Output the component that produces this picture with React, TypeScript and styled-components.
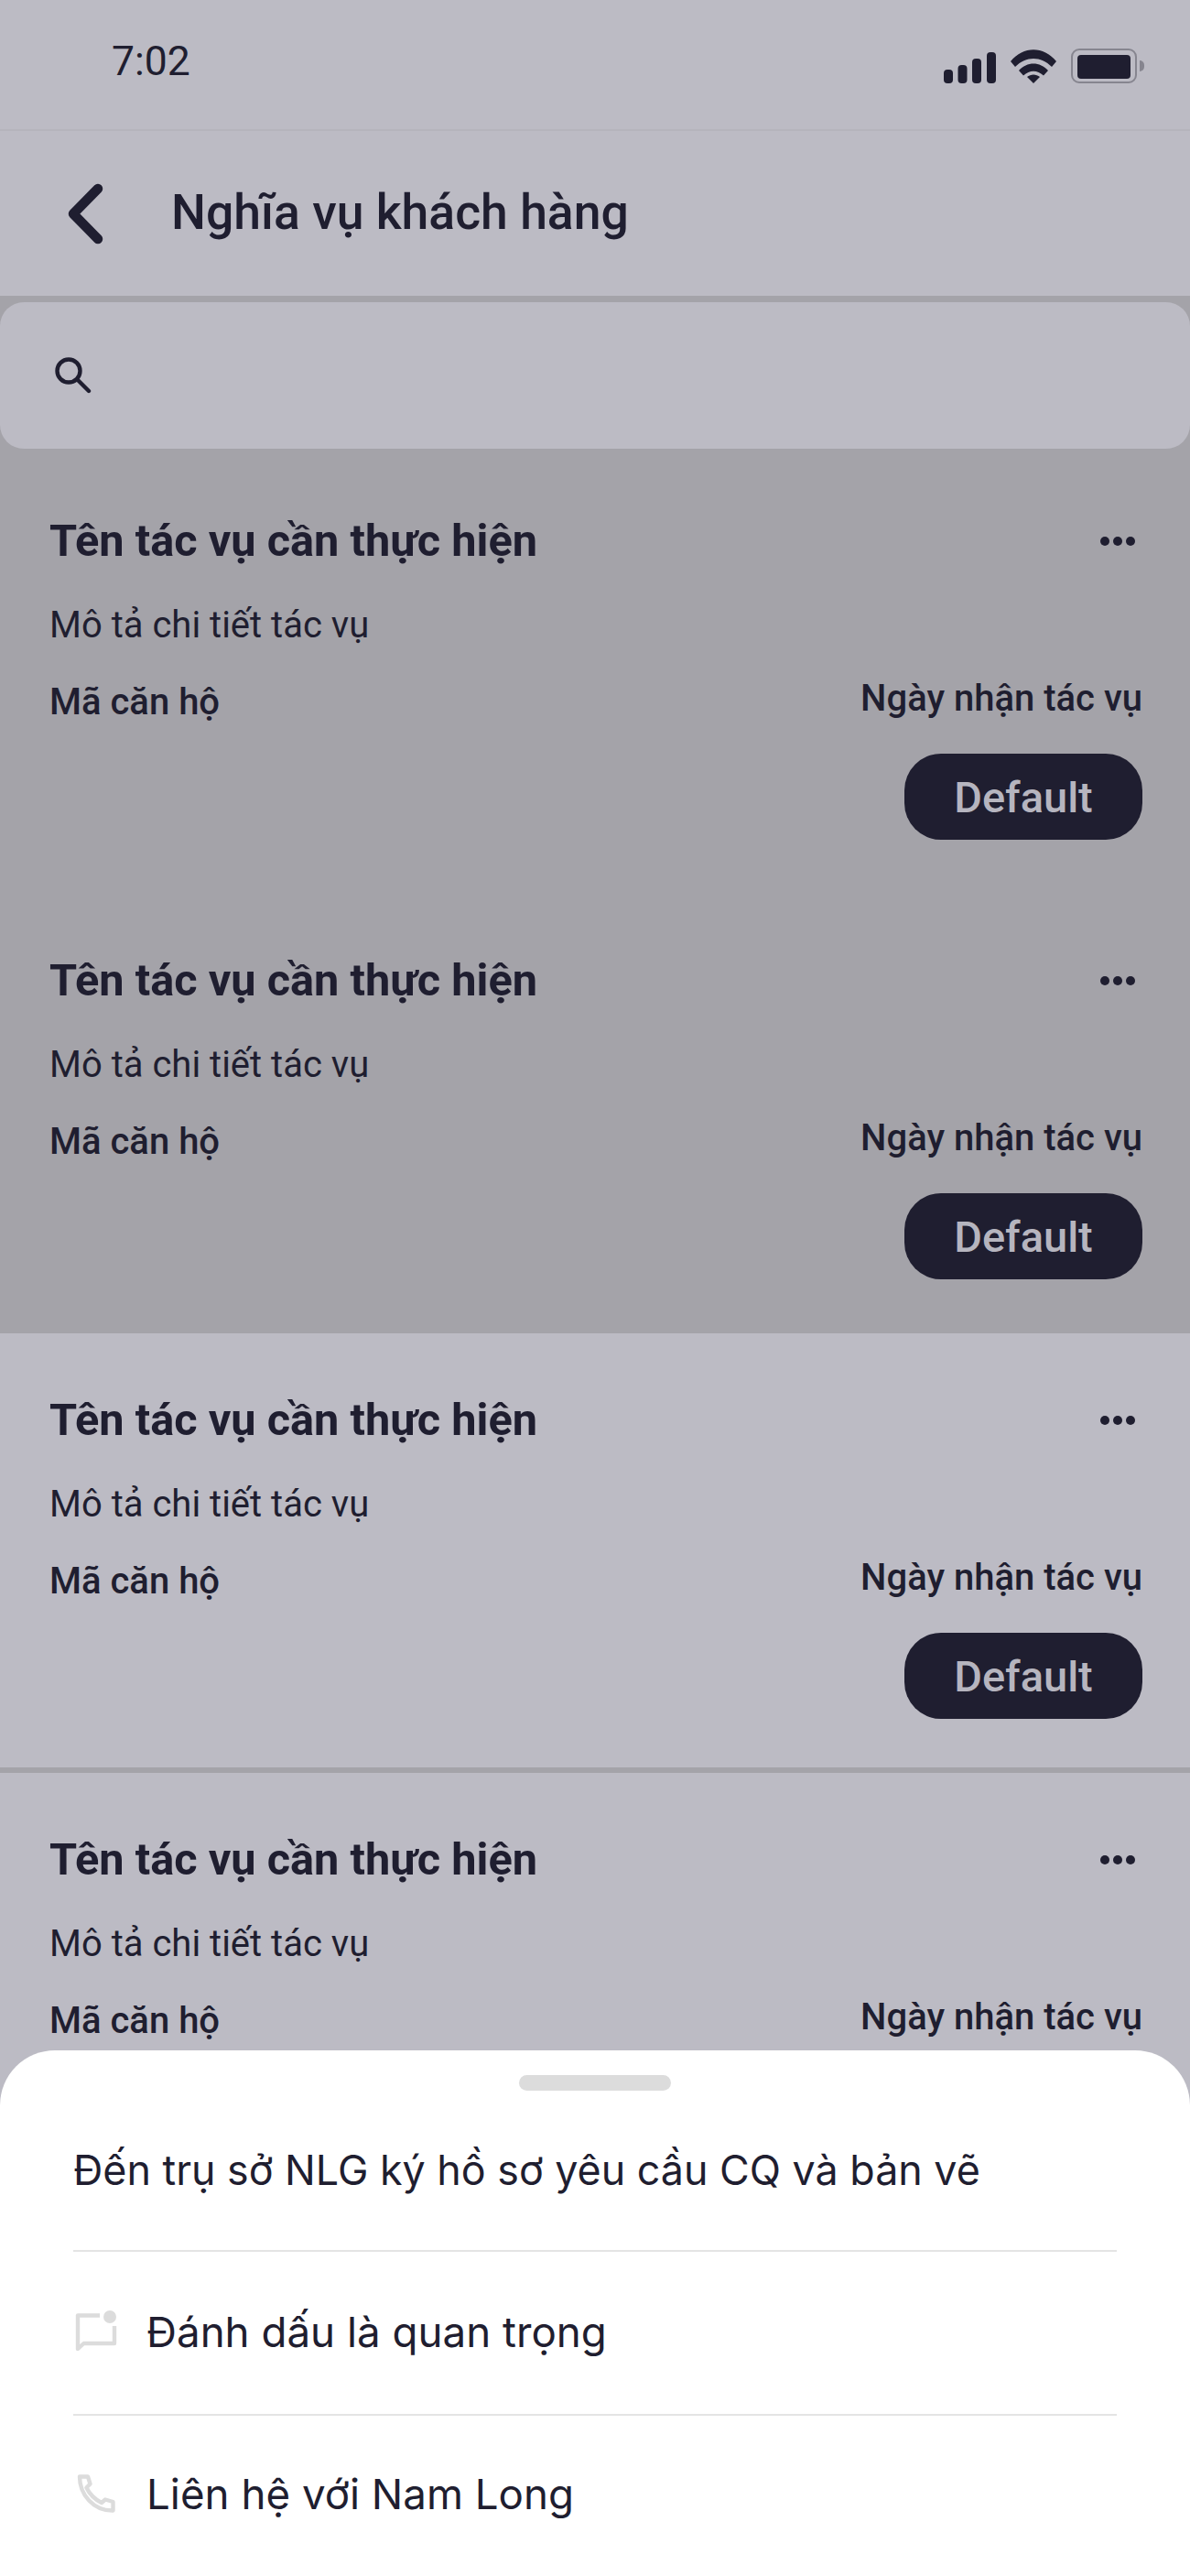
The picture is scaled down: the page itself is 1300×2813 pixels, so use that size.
import React from 'react'
import styled, { createGlobalStyle } from 'styled-components'

const INK = '#1f1e30'
const LIGHT = '#bcbbc4'
const DIM = '#a4a3a9'
const ICON_GREY = '#dcdcdc'

const GlobalStyle = createGlobalStyle`
    html, body {
        margin: 0;
        padding: 0;
        background: ${DIM};
    }
    * {
        box-sizing: border-box;
    }
`

const tasks = [
    { id: 1, dimmed: true, showButton: true },
    { id: 2, dimmed: true, showButton: true },
    { id: 3, dimmed: false, showButton: true },
    { id: 4, dimmed: false, showButton: false },
]

function SignalIcon() {
    return (
        <svg width="57" height="34" viewBox="0 0 57 34" fill={INK}>
            <rect x="0" y="19" width="10" height="15" rx="4" />
            <rect x="15.5" y="14" width="10" height="20" rx="4" />
            <rect x="31" y="7" width="10" height="27" rx="4" />
            <rect x="47" y="0" width="10" height="34" rx="4" />
        </svg>
    )
}

function WifiIcon() {
    return (
        <svg width="50" height="37" viewBox="0 0 50 37" fill={INK}>
            <path d="M0 13 C14 -4 36 -4 50 13 L45 19 C33 7 17 7 5 19 Z" />
            <path d="M9 23 C18 13 32 13 41 23 L36 28.5 C29 22 21 22 14 28.5 Z" />
            <path d="M18 30 C22 26.5 28 26.5 32 30 L25 37 Z" />
        </svg>
    )
}

function BatteryIcon() {
    return (
        <BatteryWrap>
            <BatteryBody>
                <BatteryFill />
            </BatteryBody>
            <BatteryCap />
        </BatteryWrap>
    )
}

function BackIcon() {
    return (
        <svg width="39" height="67" viewBox="0 0 39 67" fill="none">
            <path d="M33 6 L6 33.5 L33 61" stroke={INK} strokeWidth="10.5" strokeLinecap="round" strokeLinejoin="round" />
        </svg>
    )
}

function SearchIcon() {
    return (
        <svg width="40" height="40" viewBox="0 0 40 40" fill="none">
            <circle cx="15" cy="15" r="12.5" stroke={INK} strokeWidth="4.4" />
            <path d="M24.5 24.5 L37 37" stroke={INK} strokeWidth="4.4" strokeLinecap="round" />
        </svg>
    )
}

function ChatIcon() {
    return (
        <svg width="46" height="46" viewBox="0 0 46 46" fill="none">
            <path d="M27 5.5 H3 V42 L9.5 36 H43 V17" stroke={ICON_GREY} strokeWidth="4.4" strokeLinejoin="round" />
            <circle cx="38" cy="7" r="7" fill={ICON_GREY} />
        </svg>
    )
}

function PhoneIcon() {
    return (
        <svg width="42" height="42" viewBox="0 0 42 42" fill="none">
            <path
                d="M3 2.5 H12 L14.5 10.5 L10.5 14.5 C13.5 21 20 27.5 27 31 L31 27.5 L39.5 30 V39.5 C18 40 3 22 3 2.5 Z"
                stroke={ICON_GREY}
                strokeWidth="4.4"
                strokeLinejoin="round"
            />
        </svg>
    )
}

export default function App() {
    return (
        <>
            <GlobalStyle />
            <Screen>
                <StatusBar>
                    <Clock>7:02</Clock>
                    <StatusIcons>
                        <SignalIcon />
                        <WifiIcon />
                        <BatteryIcon />
                    </StatusIcons>
                </StatusBar>
                <Header>
                    <BackIcon />
                    <HeaderTitle>Nghĩa vụ khách hàng</HeaderTitle>
                </Header>
                <SearchBar>
                    <SearchIcon />
                </SearchBar>
                <TaskList>
                    {tasks.map((task) => (
                        <TaskCard key={task.id} $dimmed={task.dimmed}>
                            <TitleRow>
                                <TaskTitle>Tên tác vụ cần thực hiện</TaskTitle>
                                <MoreDots>
                                    <i />
                                    <i />
                                    <i />
                                </MoreDots>
                            </TitleRow>
                            <TaskDesc>Mô tả chi tiết tác vụ</TaskDesc>
                            <MetaRow>
                                <ApartmentCode>Mã căn hộ</ApartmentCode>
                                <ReceivedDate>Ngày nhận tác vụ</ReceivedDate>
                            </MetaRow>
                            {task.showButton && (
                                <ButtonRow>
                                    <DefaultButton>Default</DefaultButton>
                                </ButtonRow>
                            )}
                        </TaskCard>
                    ))}
                </TaskList>
                <BottomSheet>
                    <Handle />
                    <SheetTitle>Đến trụ sở NLG ký hồ sơ yêu cầu CQ và bản vẽ</SheetTitle>
                    <SheetRow>
                        <RowIcon>
                            <ChatIcon />
                        </RowIcon>
                        <RowLabel>Đánh dấu là quan trọng</RowLabel>
                    </SheetRow>
                    <SheetRow>
                        <RowIcon>
                            <PhoneIcon />
                        </RowIcon>
                        <RowLabel>Liên hệ với Nam Long</RowLabel>
                    </SheetRow>
                </BottomSheet>
            </Screen>
        </>
    )
}

const Screen = styled.div`
    position: relative;
    width: 1300px;
    height: 2813px;
    overflow: hidden;
    background: ${DIM};
    color: ${INK};
    font-family: Roboto, "Liberation Sans", sans-serif;
`

const StatusBar = styled.div`
    display: flex;
    align-items: flex-start;
    justify-content: space-between;
    height: 143px;
    padding: 41px 50px 0 122px;
    background: ${LIGHT};
    border-bottom: 2px solid #b5b4bc;
`

const Clock = styled.span`
    font-size: 44.5px;
    line-height: 52px;
`

const StatusIcons = styled.div`
    display: flex;
    align-items: flex-end;
    gap: 16px;
    margin-top: 12px;
`

const BatteryWrap = styled.div`
    display: flex;
    align-items: center;
`

const BatteryBody = styled.div`
    width: 72px;
    height: 38px;
    padding: 4px;
    border: 2px solid #86858f;
    border-radius: 9px;
`

const BatteryFill = styled.div`
    height: 100%;
    margin: 1px;
    background: ${INK};
    border-radius: 4px;
`

const BatteryCap = styled.div`
    width: 5px;
    height: 12px;
    margin-left: 3px;
    background: #86858f;
    border-radius: 0 6px 6px 0;
`

const Header = styled.div`
    display: flex;
    align-items: center;
    height: 180px;
    padding-left: 74px;
    background: ${LIGHT};
`

const HeaderTitle = styled.h1`
    margin: 0 0 3px 74px;
    font-size: 53.5px;
    font-weight: 500;
    line-height: 64px;
`

const SearchBar = styled.div`
    display: flex;
    align-items: center;
    height: 160px;
    margin-top: 7px;
    padding-left: 60px;
    background: ${LIGHT};
    border-radius: 26px;
`

const TaskList = styled.div`
    display: flex;
    flex-direction: column;
    gap: 6px;
    margin-top: 6px;
`

const TaskCard = styled.div<{ $dimmed: boolean }>`
    height: 474px;
    flex-shrink: 0;
    padding: 65px 52px 0 54px;
    background: ${(p) => (p.$dimmed ? DIM : LIGHT)};
`

const TitleRow = styled.div`
    display: flex;
    align-items: center;
    justify-content: space-between;
    height: 60px;
`

const TaskTitle = styled.h2`
    margin: 0;
    font-size: 48.7px;
    font-weight: 700;
    line-height: 60px;
`

const MoreDots = styled.div`
    display: flex;
    gap: 4px;
    margin-right: 8px;

    i {
        display: block;
        width: 10px;
        height: 10px;
        background: ${INK};
        border-radius: 50%;
    }
`

const TaskDesc = styled.p`
    margin: 0;
    padding-top: 38px;
    font-size: 40px;
    line-height: 48px;
`

const MetaRow = styled.div`
    display: flex;
    align-items: flex-start;
    justify-content: space-between;
    margin-top: 32px;
`

const ApartmentCode = styled.span`
    padding-top: 4px;
    font-size: 40px;
    font-weight: 500;
    line-height: 48px;
`

const ReceivedDate = styled.span`
    font-size: 40px;
    font-weight: 500;
    line-height: 48px;
`

const ButtonRow = styled.div`
    display: flex;
    justify-content: flex-end;
    margin-top: 32px;
`

const DefaultButton = styled.button`
    width: 260px;
    height: 94px;
    padding: 0;
    border: none;
    border-radius: 40px;
    background: ${INK};
    color: #b6b5bf;
    font-family: inherit;
    font-size: 47px;
    font-weight: 500;
`

const BottomSheet = styled.div`
    position: absolute;
    left: 0;
    right: 0;
    bottom: 0;
    height: 574px;
    padding: 27px 80px 0;
    background: #fff;
    border-radius: 60px 60px 0 0;
    font-family: Inter, Roboto, sans-serif;
`

const Handle = styled.div`
    width: 166px;
    height: 17px;
    margin: 0 auto;
    background: #dcdcdc;
    border-radius: 9px;
`

const SheetTitle = styled.div`
    display: flex;
    align-items: center;
    height: 176px;
    font-size: 44.8px;
    border-bottom: 2px solid #e4e4e4;
`

const SheetRow = styled.div`
    display: flex;
    align-items: center;
    height: 177px;
    padding-bottom: 3px;

    & + & {
        padding-bottom: 5px;
        border-top: 2px solid #e4e4e4;
    }
`

const RowIcon = styled.div`
    display: flex;
    align-items: center;
    justify-content: center;
    width: 80px;
    padding-right: 30px;
`

const RowLabel = styled.span`
    font-size: 45.7px;
`
